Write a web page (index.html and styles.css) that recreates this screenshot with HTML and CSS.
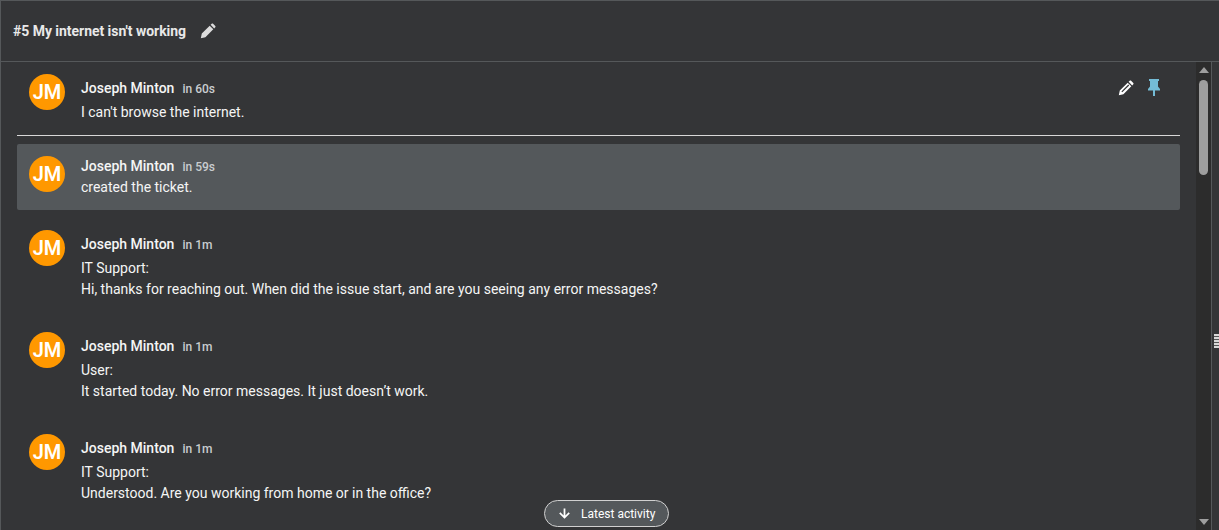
FILE: index.html
```html
<!DOCTYPE html>
<html lang="en">
<head>
<meta charset="UTF-8" />
<title>#5 My internet isn't working</title>
<link rel="stylesheet" href="styles.css">
</head>
<body>

<div class="panel">
  <header class="ticket-header">
    <h1>#5 My internet isn't working</h1>
    <svg class="icon title-edit" viewBox="0 0 16 16"><path d="M0.8 15.2l1-4.6 7.9-7.9 3.6 3.6-7.9 7.9zM10.6 1.8l1.1-1.1c.4-.4 1-.4 1.4 0l2.2 2.2c.4.4.4 1 0 1.4l-1.1 1.1z"/></svg>
  </header>

  <div class="ticket-body">
    <div class="activity">
      <!-- pinned description -->
      <div class="entry">
        <div class="avatar">JM</div>
        <div class="entry-body">
          <div class="entry-head"><span class="author">Joseph Minton</span><span class="when">in 60s</span></div>
          <p>I can't browse the internet.</p>
        </div>
        <div class="entry-actions">
          <svg class="icon action-edit" viewBox="0 0 16 16"><path fill-rule="evenodd" d="M0.8 15.2l1-4.6 7.9-7.9 3.6 3.6-7.9 7.9zM3.4 11.4l.9.9 6.9-6.9-.9-.9zM10.6 1.8l1.1-1.1c.4-.4 1-.4 1.4 0l2.2 2.2c.4.4.4 1 0 1.4l-1.1 1.1z"/></svg>
          <svg class="icon action-pin" viewBox="0 0 14 17"><path d="M2 0h10v2h-1v5.5l2 2.5v1.5H8V17H6v-5.5H1V10l2-2.5V2H2z"/></svg>
        </div>
      </div>
      <hr class="pin-divider">

      <div class="entry entry-created">
        <div class="avatar">JM</div>
        <div class="entry-body">
          <div class="entry-head"><span class="author">Joseph Minton</span><span class="when">in 59s</span></div>
          <p>created the ticket.</p>
        </div>
      </div>

      <div class="entry">
        <div class="avatar">JM</div>
        <div class="entry-body">
          <div class="entry-head"><span class="author">Joseph Minton</span><span class="when">in 1m</span></div>
          <p>IT Support:<br>Hi, thanks for reaching out. When did the issue start, and are you seeing any error messages?</p>
        </div>
      </div>

      <div class="entry">
        <div class="avatar">JM</div>
        <div class="entry-body">
          <div class="entry-head"><span class="author">Joseph Minton</span><span class="when">in 1m</span></div>
          <p>User:<br>It started today. No error messages. It just doesn’t work.</p>
        </div>
      </div>

      <div class="entry">
        <div class="avatar">JM</div>
        <div class="entry-body">
          <div class="entry-head"><span class="author">Joseph Minton</span><span class="when">in 1m</span></div>
          <p>IT Support:<br>Understood. Are you working from home or in the office?</p>
        </div>
      </div>
    </div>

    <div class="scrollbar">
      <span class="arrow arrow-up"></span>
      <div class="track"><div class="thumb"></div></div>
      <span class="arrow arrow-down"></span>
    </div>

    <div class="resize-strip"><span class="grip"></span></div>

    <button class="latest-btn">
      <svg class="icon" viewBox="0 0 24 24"><path d="M20.5 12l-1.9-1.9-5.2 5.2V4h-2.8v11.3l-5.2-5.2L3.5 12l8.5 8.5z"/></svg>
      Latest activity
    </button>
  </div>
</div>

</body>
</html>
```

FILE: styles.css
```css
* {
  box-sizing: border-box;
}
html, body {
  height: 100%;
}
body {
  margin: 0;
  background-color: #343537;
  color: #f5f5f5;
  font-family: Roboto, "Liberation Sans", sans-serif;
  font-size: 14px;
  line-height: 21px;
  overflow: hidden;
}
.icon {
  display: block;
  fill: currentColor;
}
.panel {
  height: 100%;
  display: flex;
  flex-direction: column;
  border-top: 1px solid #55585a;
  border-left: 1px solid #55585a;
}
.ticket-header {
  flex: none;
  height: 61px;
  display: flex;
  align-items: center;
  gap: 14px;
  padding-left: 12px;
  border-bottom: 1px solid #55585a;
}
.ticket-header h1 {
  margin: 0;
  font-size: 14px;
  font-weight: 700;
  letter-spacing: -0.04px;
  color: #e8e8e8;
}
.title-edit {
  width: 16px;
  height: 16px;
  color: #dddddd;
}
.ticket-body {
  flex: 1;
  min-height: 0;
  position: relative;
  display: flex;
}
.activity {
  flex: 1;
  min-width: 0;
  padding: 12px 16px 0;
  overflow: hidden;
}
.entry {
  display: flex;
  gap: 16px;
  padding: 0 12px;
  margin-bottom: 32px;
}
.entry:first-child {
  margin-bottom: 0;
}
.entry-created {
  padding-top: 12px;
  padding-bottom: 12px;
  margin-bottom: 20px;
  background-color: #54585b;
  border-radius: 2px;
}
.entry-created .entry-body {
  padding-top: 0;
}
.entry-created .entry-head {
  margin-bottom: 0;
}
.avatar {
  flex: none;
  width: 36px;
  height: 36px;
  border-radius: 50%;
  background-color: #ff9800;
  color: #fff;
  font-size: 20px;
  font-weight: 600;
  line-height: 36px;
  text-align: center;
}
.entry-body {
  flex: 1;
  min-width: 0;
  padding-top: 4px;
}
.entry-head {
  display: flex;
  align-items: baseline;
  gap: 8px;
  height: 21px;
  margin-bottom: 3px;
}
.author {
  font-weight: 500;
}
.when {
  font-size: 12px;
  font-weight: 500;
  color: #c9cdd0;
}
.entry-body p {
  margin: 0;
}
.entry-actions {
  flex: none;
  display: flex;
  align-items: flex-start;
  gap: 13px;
  padding: 6px 7px 0 0;
}
.action-edit {
  width: 16px;
  height: 16px;
  color: #ffffff;
}
.action-pin {
  width: 14px;
  height: 17px;
  margin-top: -1px;
  color: #74bcd6;
}
.pin-divider {
  margin: 12px 0 8px;
  border: 0;
  border-top: 1px solid #d8d8d8;
}
.scrollbar {
  flex: none;
  width: 15px;
  display: flex;
  flex-direction: column;
  align-items: center;
  background-color: #2c2c2c;
}
.arrow {
  flex: none;
  width: 0;
  height: 0;
  border-left: 5px solid transparent;
  border-right: 5px solid transparent;
}
.arrow-up {
  margin-top: 5px;
  border-bottom: 6px solid #9e9e9e;
}
.arrow-down {
  margin-bottom: 5px;
  border-top: 6px solid #9e9e9e;
}
.track {
  flex: 1;
  width: 100%;
  padding: 7px 3px 0;
}
.thumb {
  height: 95px;
  border-radius: 5px;
  background-color: #9e9e9e;
}
.resize-strip {
  flex: none;
  width: 8px;
  border-left: 1px solid #55585a;
  position: relative;
}
.grip {
  position: absolute;
  top: 272px;
  right: 0;
  width: 5px;
  height: 14px;
  background: repeating-linear-gradient(to bottom, #d8d8d8 0 2px, #555 2px 3px);
}
.latest-btn {
  position: absolute;
  left: 543px;
  bottom: 3px;
  width: 125px;
  height: 27px;
  display: flex;
  align-items: center;
  gap: 9px;
  padding: 0 0 0 12px;
  border: 1px solid #d0d0d0;
  border-radius: 14px;
  background-color: #54585b;
  color: #ffffff;
  font-family: inherit;
  font-size: 12px;
}
.latest-btn .icon {
  width: 15px;
  height: 15px;
}
```
